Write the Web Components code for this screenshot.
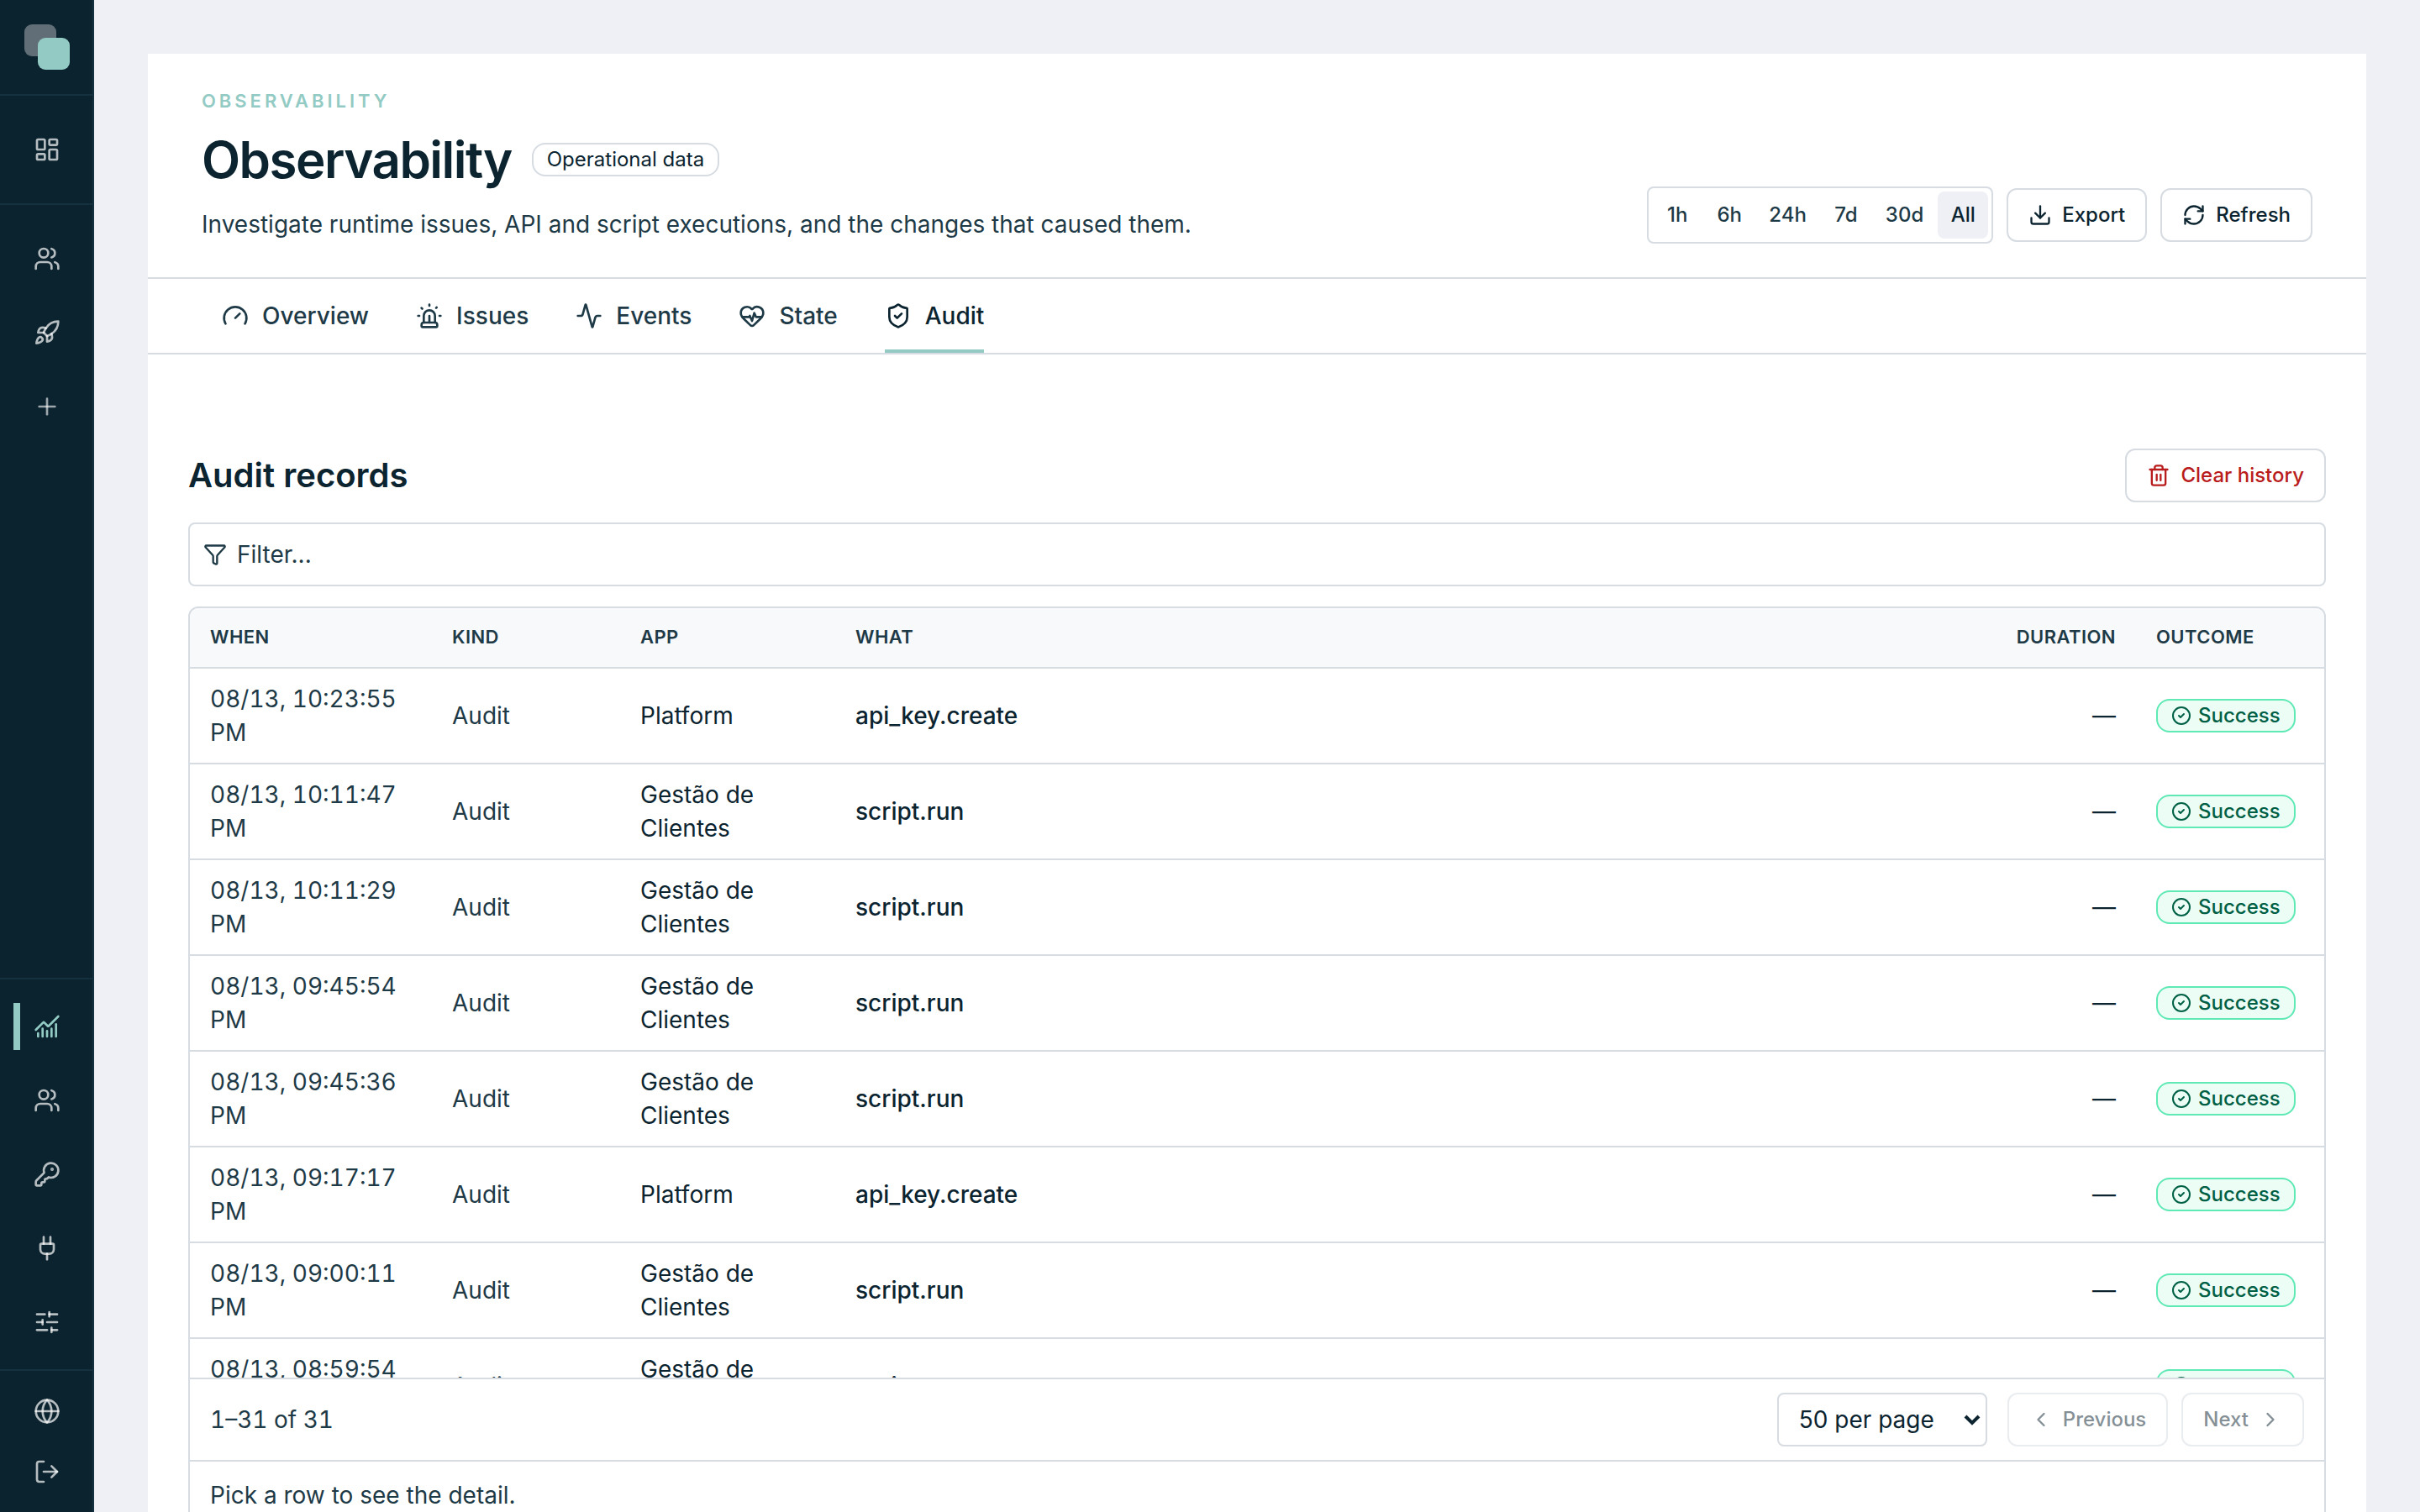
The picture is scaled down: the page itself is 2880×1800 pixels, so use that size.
<!DOCTYPE html>
<html lang="en">
<head>
<meta charset="UTF-8">
<meta name="viewport" content="width=device-width, initial-scale=1.0">
<title>Observability</title>
<style>
    :root{
        --ink: #0b2430;
        --ink-soft: #1e3a47;
        --line: #d6dce2;
        --accent: #93cbc4;
        --canvas: #eff0f5;
        --danger: #b91c1c;
    }

    body{
        margin: 0;
        background-color: var(--canvas);
        color: var(--ink);
        font-family: Inter, "Liberation Sans", sans-serif;
        font-size: 28px;
        line-height: 40px;
    }
</style>
</head>
<body>
<app-shell>
    <side-bar slot="side"></side-bar>
    <page-header label="Observability" title-text="Observability" badge="Operational data">
        Investigate runtime issues, API and script executions, and the changes that caused them.
    </page-header>
    <tab-bar active="Audit"></tab-bar>
    <audit-records></audit-records>
</app-shell>

<script>
'use strict'

/* Stroke icons on a 24 x 24 grid */
const ICONS = {
    dashboard: '<rect width="7" height="9" x="3" y="3" rx="1"/><rect width="7" height="5" x="14" y="3" rx="1"/><rect width="7" height="9" x="14" y="12" rx="1"/><rect width="7" height="5" x="3" y="16" rx="1"/>',
    users: '<path d="M16 21v-2a4 4 0 0 0-4-4H6a4 4 0 0 0-4 4v2"/><path d="M16 3.128a4 4 0 0 1 0 7.744"/><path d="M22 21v-2a4 4 0 0 0-3-3.87"/><circle cx="9" cy="7" r="4"/>',
    rocket: '<path d="M4.5 16.5c-1.5 1.26-2 5-2 5s3.74-.5 5-2c.71-.84.7-2.13-.09-2.91a2.18 2.18 0 0 0-2.91-.09z"/><path d="m12 15-3-3a22 22 0 0 1 2-3.95A12.88 12.88 0 0 1 22 2c0 2.72-.78 7.5-6 11a22.35 22.35 0 0 1-4 2z"/><path d="M9 12H4s.55-3.03 2-4c1.62-1.08 5 0 5 0"/><path d="M12 15v5s3.03-.55 4-2c1.08-1.62 0-5 0-5"/>',
    plus: '<path d="M5 12h14"/><path d="M12 5v14"/>',
    chart: '<path d="M12 16v5"/><path d="M16 14v7"/><path d="M20 10v11"/><path d="m22 3-8.646 8.646a.5.5 0 0 1-.708 0L9.354 8.354a.5.5 0 0 0-.707 0L2 15"/><path d="M4 18v3"/><path d="M8 14v7"/>',
    key: '<path d="M2.586 17.414A2 2 0 0 0 2 18.828V21a1 1 0 0 0 1 1h3a1 1 0 0 0 1-1v-1a1 1 0 0 1 1-1h1a1 1 0 0 0 1-1v-1a1 1 0 0 1 1-1h.172a2 2 0 0 0 1.414-.586l.814-.814a6.5 6.5 0 1 0-4-4z"/><circle cx="16.5" cy="7.5" r=".5" fill="currentColor"/>',
    plug: '<path d="M12 22v-5"/><path d="M15 8V2"/><path d="M17 8a1 1 0 0 1 1 1v4a4 4 0 0 1-4 4h-4a4 4 0 0 1-4-4V9a1 1 0 0 1 1-1z"/><path d="M9 8V2"/>',
    sliders: '<path d="M10 5H3"/><path d="M12 19H3"/><path d="M14 3v4"/><path d="M16 17v4"/><path d="M21 12h-9"/><path d="M21 19h-5"/><path d="M21 5h-7"/><path d="M8 10v4"/><path d="M8 12H3"/>',
    globe: '<circle cx="12" cy="12" r="10"/><path d="M12 2a14.5 14.5 0 0 0 0 20 14.5 14.5 0 0 0 0-20"/><path d="M2 12h20"/>',
    logout: '<path d="m16 17 5-5-5-5"/><path d="M21 12H9"/><path d="M9 21H5a2 2 0 0 1-2-2V5a2 2 0 0 1 2-2h4"/>',
    gauge: '<path d="m12 14 4-4"/><path d="M3.34 19a10 10 0 1 1 17.32 0"/>',
    siren: '<path d="M7 18v-6a5 5 0 1 1 10 0v6"/><path d="M5 21a1 1 0 0 0 1 1h12a1 1 0 0 0 1-1v-1a2 2 0 0 0-2-2H7a2 2 0 0 0-2 2z"/><path d="M21 12h1"/><path d="M18.5 4.5 18 5"/><path d="M2 12h1"/><path d="M12 2v1"/><path d="m4.929 4.929.707.707"/><path d="M12 12v6"/>',
    activity: '<path d="M22 12h-2.48a2 2 0 0 0-1.93 1.46l-2.35 8.36a.25.25 0 0 1-.48 0L9.24 2.18a.25.25 0 0 0-.48 0l-2.35 8.36A2 2 0 0 1 4.49 12H2"/>',
    heart: '<path d="M2 9.5a5.5 5.5 0 0 1 9.591-3.676.56.56 0 0 0 .818 0A5.49 5.49 0 0 1 22 9.5c0 2.29-1.5 4-3 5.5l-5.492 5.313a2 2 0 0 1-3 .019L5 15c-1.5-1.5-3-3.2-3-5.5"/><path d="M3.22 13H9.5l.5-1 2 4.5 2-7 1.5 3.5h5.27"/>',
    shield: '<path d="M20 13c0 5-3.5 7.5-7.66 8.95a1 1 0 0 1-.67-.01C7.5 20.5 4 18 4 13V6a1 1 0 0 1 1-1c2 0 4.5-1.2 6.24-2.72a1.17 1.17 0 0 1 1.52 0C14.51 3.81 17 5 19 5a1 1 0 0 1 1 1z"/><path d="m9 12 2 2 4-4"/>',
    download: '<path d="M12 15V3"/><path d="M21 15v4a2 2 0 0 1-2 2H5a2 2 0 0 1-2-2v-4"/><path d="m7 10 5 5 5-5"/>',
    refresh: '<path d="M3 12a9 9 0 0 1 9-9 9.75 9.75 0 0 1 6.74 2.74L21 8"/><path d="M21 3v5h-5"/><path d="M21 12a9 9 0 0 1-9 9 9.75 9.75 0 0 1-6.74-2.74L3 16"/><path d="M8 16H3v5"/>',
    funnel: '<path d="M10 20a1 1 0 0 0 .553.895l2 1A1 1 0 0 0 14 21v-7a2 2 0 0 1 .517-1.341L21.74 4.67A1 1 0 0 0 21 3H3a1 1 0 0 0-.742 1.67l7.225 7.989A2 2 0 0 1 10 14z"/>',
    trash: '<path d="M10 11v6"/><path d="M14 11v6"/><path d="M19 6v14a2 2 0 0 1-2 2H7a2 2 0 0 1-2-2V6"/><path d="M3 6h18"/><path d="M8 6V4a2 2 0 0 1 2-2h4a2 2 0 0 1 2 2v2"/>',
    check: '<circle cx="12" cy="12" r="10"/><path d="m9 12 2 2 4-4"/>',
    left: '<path d="m15 18-6-6 6-6"/>',
    right: '<path d="m9 18 6-6-6-6"/>'
}

/* Base class: every element has an open shadow root with its markup and its styles */
class base extends HTMLElement{
    constructor(){
        super()
        this.shadow = this.attachShadow({mode:'open'})
    }

    connectedCallback(){
        this.shadow.innerHTML = `<style>
        *{
            box-sizing: border-box;
        }
        button, input, select{
            font: inherit;
            color: inherit;
            margin: 0;
        }
        ${this.styles()}
        </style>${this.component()}`
    }
}

class icon extends base{
    styles(){
        return `
        :host{
            display: block;
            flex: none;
            width: var(--icon-size, 32px);
            height: var(--icon-size, 32px);
        }
        svg{
            display: block;
            width: 100%;
            height: 100%;
        }`
    }
    component(){
        return `<svg viewBox="0 0 24 24" fill="none" stroke="currentColor" stroke-width="2" stroke-linecap="round" stroke-linejoin="round" aria-hidden="true">${ICONS[this.getAttribute('name')]}</svg>`
    }
}

/* Page frame: fixed rail on the left, scrolling card on the right */
class shell extends base{
    styles(){
        return `
        :host{
            display: flex;
            height: 100vh;
        }
        main{
            flex: 1;
            min-width: 0;
            padding: 64px;
            overflow-y: auto;
            scrollbar-width: none;
        }
        .sheet{
            background-color: #fff;
            min-height: 100%;
        }`
    }
    component(){
        return `<slot name="side"></slot><main><div class="sheet"><slot></slot></div></main>`
    }
}

class sidebar extends base{
    styles(){
        return `
        :host{
            display: flex;
            flex-direction: column;
            flex: none;
            width: 112px;
            background-color: #0b232f;
            box-shadow: inset -2px 0 #15313f;
            color: rgba(255, 255, 255, .7);
        }
        .logo{
            height: 112px;
            display: grid;
            place-items: center;
        }
        .logo svg{
            display: block;
            width: 56px;
            height: 56px;
        }
        nav{
            display: flex;
            flex-direction: column;
            gap: 8px;
            padding: 24px 0;
            border-top: 2px solid #15313f;
        }
        .low{
            margin-top: auto;
            padding: 16px 0;
        }
        .foot{
            gap: 0;
            padding: 12px 0;
        }
        a{
            display: grid;
            grid-template-columns: 8px 1fr;
            align-items: center;
            justify-items: center;
            height: 80px;
            padding: 0 24px 0 16px;
            color: inherit;
        }
        a::before{
            content: "";
            height: 56px;
            width: 8px;
        }
        .foot a{
            height: 72px;
        }
        a[href="#plus"]{
            color: rgba(255, 255, 255, .6);
        }
        a[aria-current]{
            color: var(--accent);
        }
        a[aria-current]::before{
            background-color: var(--accent);
        }`
    }
    link(name, label, current){
        return `<a href="#${name}" aria-label="${label}"${current ? ' aria-current="page"' : ''}><ui-icon name="${name}"></ui-icon></a>`
    }
    component(){
        return `
        <div class="logo">
            <svg viewBox="0 0 56 56" aria-hidden="true">
                <rect x="1" y="1" width="38" height="38" rx="9" fill="#616e77"/>
                <rect x="17" y="17" width="38" height="38" rx="9" fill="#93cbc4"/>
            </svg>
        </div>
        <nav>${this.link('dashboard', 'Dashboard')}</nav>
        <nav>
            ${this.link('users', 'Customers')}
            ${this.link('rocket', 'Launch')}
            ${this.link('plus', 'New app')}
        </nav>
        <nav class="low">
            ${this.link('chart', 'Observability', true)}
            ${this.link('users', 'Users')}
            ${this.link('key', 'API keys')}
            ${this.link('plug', 'Connections')}
            ${this.link('sliders', 'Settings')}
        </nav>
        <nav class="foot">
            ${this.link('globe', 'Language')}
            ${this.link('logout', 'Sign out')}
        </nav>`
    }
}

/* Rounded label; tone="success" gives the green one */
class badge extends base{
    styles(){
        return `
        :host{
            display: flex;
            align-items: center;
            gap: 8px;
            width: fit-content;
            height: 40px;
            box-sizing: border-box;
            padding: 0 16px;
            border: 2px solid var(--line);
            border-radius: 16px;
            font-size: 24px;
            line-height: 32px;
            white-space: nowrap;
            --icon-size: 24px;
        }
        :host([tone="success"]){
            background-color: #ecfdf5;
            border-color: #5ee9b5;
            color: #006045;
            font-weight: 500;
        }`
    }
    component(){
        return `<slot></slot>`
    }
}

class toolButton extends base{
    styles(){
        return `
        :host{
            display: block;
            --icon-size: 28px;
        }
        button{
            display: flex;
            align-items: center;
            gap: 12px;
            height: 64px;
            padding: 0 24px;
            border: 2px solid var(--line);
            border-radius: 12px;
            background-color: #fff;
            font-size: 24px;
            line-height: 32px;
            font-weight: 500;
            white-space: nowrap;
        }
        button:disabled{
            opacity: .5;
        }
        :host([tone="danger"]) button{
            color: var(--danger);
        }`
    }
    component(){
        const icone = `<ui-icon name="${this.getAttribute('icon')}"></ui-icon>`
        const fim = this.hasAttribute('icon-end')
        return `<button type="button"${this.hasAttribute('disabled') ? ' disabled' : ''}>${fim ? '' : icone}<slot></slot>${fim ? icone : ''}</button>`
    }
}

/* Period selector */
class timeRange extends base{
    styles(){
        return `
        :host{
            display: flex;
            gap: 2px;
            padding: 4px;
            border: 2px solid var(--line);
            border-radius: 8px;
        }
        button{
            min-width: 60px;
            height: 56px;
            padding: 0 15px;
            border: 0;
            border-radius: 8px;
            background: none;
            color: var(--ink-soft);
            font-size: 24px;
            line-height: 32px;
            font-weight: 500;
        }
        button[aria-pressed="true"]{
            background-color: var(--canvas);
            color: var(--ink);
        }`
    }
    component(){
        return ['1h', '6h', '24h', '7d', '30d', 'All'].map(p =>
            `<button type="button" aria-pressed="${p === 'All'}">${p}</button>`).join('')
    }
}

class pageHeader extends base{
    styles(){
        return `
        :host{
            display: block;
            border-bottom: 2px solid var(--line);
        }
        header{
            display: flex;
            justify-content: space-between;
            align-items: flex-end;
            gap: 32px;
            padding: 40px 64px;
        }
        .text{
            display: flex;
            flex-direction: column;
            gap: 16px;
        }
        .label{
            margin: 0;
            color: var(--accent);
            font-size: 22px;
            line-height: 32px;
            font-weight: 600;
            letter-spacing: .18em;
            text-transform: uppercase;
        }
        .title{
            display: flex;
            align-items: center;
            gap: 24px;
        }
        h1{
            margin: 0;
            font-size: 60px;
            line-height: 76px;
            font-weight: 600;
            letter-spacing: -.025em;
        }
        .about{
            margin: 0;
            color: var(--ink-soft);
            line-height: 46px;
        }
        .actions{
            display: flex;
            align-items: center;
            gap: 16px;
        }`
    }
    component(){
        return `
        <header>
            <div class="text">
                <p class="label">${this.getAttribute('label')}</p>
                <div class="title">
                    <h1>${this.getAttribute('title-text')}</h1>
                    <ui-badge>${this.getAttribute('badge')}</ui-badge>
                </div>
                <p class="about"><slot></slot></p>
            </div>
            <div class="actions">
                <time-range></time-range>
                <tool-button icon="download">Export</tool-button>
                <tool-button icon="refresh">Refresh</tool-button>
            </div>
        </header>`
    }
}

class tabBar extends base{
    styles(){
        return `
        :host{
            display: block;
            border-bottom: 2px solid var(--line);
        }
        nav{
            display: flex;
            gap: 56px;
            padding: 0 88px;
        }
        a{
            display: flex;
            align-items: center;
            gap: 16px;
            height: 88px;
            border: 0 solid transparent;
            border-width: 4px 0;
            color: var(--ink-soft);
            font-weight: 500;
            text-decoration: none;
        }
        a[aria-current]{
            color: var(--ink);
            border-bottom-color: var(--accent);
        }`
    }
    component(){
        const tabs = [['gauge', 'Overview'], ['siren', 'Issues'], ['activity', 'Events'], ['heart', 'State'], ['shield', 'Audit']]
        return `<nav aria-label="Sections">${tabs.map(([name, text]) =>
            `<a href="#${text.toLowerCase()}"${text === this.getAttribute('active') ? ' aria-current="page"' : ''}><ui-icon name="${name}"></ui-icon>${text}</a>`).join('')}</nav>`
    }
}

const RECORDS = [
    ['08/13, 10:23:55 PM', 'Platform', 'api_key.create'],
    ['08/13, 10:11:47 PM', 'Gestão de Clientes', 'script.run'],
    ['08/13, 10:11:29 PM', 'Gestão de Clientes', 'script.run'],
    ['08/13, 09:45:54 PM', 'Gestão de Clientes', 'script.run'],
    ['08/13, 09:45:36 PM', 'Gestão de Clientes', 'script.run'],
    ['08/13, 09:17:17 PM', 'Platform', 'api_key.create'],
    ['08/13, 09:00:11 PM', 'Gestão de Clientes', 'script.run'],
    ['08/13, 08:59:54 PM', 'Gestão de Clientes', 'script.run']
]

/* Audit list: filter, table that scrolls under its own header, pager */
class auditRecords extends base{
    styles(){
        return `
        :host{
            display: flex;
            flex-direction: column;
            gap: 24px;
            padding: 112px 48px 48px;
        }
        .head{
            display: flex;
            justify-content: space-between;
            align-items: center;
        }
        h2{
            margin: 0;
            font-size: 40px;
            line-height: 56px;
            font-weight: 600;
        }
        .filter{
            display: flex;
            align-items: center;
            gap: 12px;
            height: 76px;
            padding: 0 16px;
            border: 2px solid var(--line);
            border-radius: 8px;
            color: var(--ink-soft);
            --icon-size: 28px;
        }
        input{
            flex: 1;
            min-width: 0;
            padding: 0;
            border: 0;
            outline: 0;
            background: none;
        }
        input::placeholder{
            color: inherit;
            opacity: 1;
        }
        .list{
            border: 2px solid var(--line);
            border-radius: 12px;
            overflow: hidden;
        }
        .scroll{
            max-height: calc(100vh - 884px);
            overflow-y: auto;
            scrollbar-width: none;
        }
        table{
            width: 100%;
            table-layout: fixed;
            border-collapse: separate;
            border-spacing: 0;
        }
        th, td{
            padding: 16px 24px;
            border-bottom: 2px solid var(--line);
            text-align: left;
        }
        th{
            position: sticky;
            top: 0;
            z-index: 1;
            height: 72px;
            padding: 0 24px 2px;
            background-color: #f8f9fb;
            color: var(--ink-soft);
            font-size: 22px;
            line-height: 32px;
            font-weight: 600;
            letter-spacing: .02em;
        }
        .when{ width: 288px; }
        .kind{ width: 224px; }
        .app{ width: 256px; }
        .time{ width: 208px; text-align: right; }
        .end{ width: 224px; }
        td.when, td.kind{
            color: var(--ink-soft);
        }
        td.when{
            font-variant-numeric: tabular-nums;
        }
        td.what{
            font-weight: 500;
        }
        .pager{
            display: flex;
            align-items: center;
            gap: 16px;
            padding: 16px 24px;
            border-top: 2px solid var(--line);
        }
        .count{
            margin-right: auto;
            color: var(--ink-soft);
            font-variant-numeric: tabular-nums;
        }
        .size{
            position: relative;
            margin-right: 8px;
        }
        select{
            display: block;
            width: 250px;
            height: 64px;
            padding: 0 24px;
            border: 2px solid var(--line);
            border-radius: 8px;
            background-color: #fff;
            appearance: none;
        }
        .size svg{
            position: absolute;
            right: 8px;
            top: 24px;
            width: 20px;
            height: 16px;
            pointer-events: none;
        }
        .detail{
            margin: 0;
            padding: 20px 24px;
            border-top: 2px solid var(--line);
            color: var(--ink-soft);
        }`
    }
    row([when, app, what]){
        return `
        <tr>
            <td class="when">${when}</td>
            <td class="kind">Audit</td>
            <td class="app">${app}</td>
            <td class="what">${what}</td>
            <td class="time">—</td>
            <td class="end"><ui-badge tone="success"><ui-icon name="check"></ui-icon>Success</ui-badge></td>
        </tr>`
    }
    component(){
        return `
        <div class="head">
            <h2>Audit records</h2>
            <tool-button icon="trash" tone="danger">Clear history</tool-button>
        </div>
        <label class="filter">
            <ui-icon name="funnel"></ui-icon>
            <input type="text" placeholder="Filter..." aria-label="Filter">
        </label>
        <section class="list">
            <div class="scroll">
                <table>
                    <thead>
                        <tr>
                            <th class="when">WHEN</th>
                            <th class="kind">KIND</th>
                            <th class="app">APP</th>
                            <th class="what">WHAT</th>
                            <th class="time">DURATION</th>
                            <th class="end">OUTCOME</th>
                        </tr>
                    </thead>
                    <tbody>${RECORDS.map(r => this.row(r)).join('')}</tbody>
                </table>
            </div>
            <div class="pager">
                <span class="count">1–31 of 31</span>
                <div class="size">
                    <select aria-label="Rows per page">
                        <option>50 per page</option>
                    </select>
                    <svg viewBox="0 0 20 16" fill="none" stroke="currentColor" stroke-width="4" aria-hidden="true"><path d="m2 4 8 8 8-8"/></svg>
                </div>
                <tool-button icon="left" disabled>Previous</tool-button>
                <tool-button icon="right" icon-end disabled>Next</tool-button>
            </div>
            <p class="detail">Pick a row to see the detail.</p>
        </section>`
    }
}

customElements.define('ui-icon', icon)
customElements.define('ui-badge', badge)
customElements.define('tool-button', toolButton)
customElements.define('time-range', timeRange)
customElements.define('side-bar', sidebar)
customElements.define('page-header', pageHeader)
customElements.define('tab-bar', tabBar)
customElements.define('audit-records', auditRecords)
customElements.define('app-shell', shell)
</script>
</body>
</html>
